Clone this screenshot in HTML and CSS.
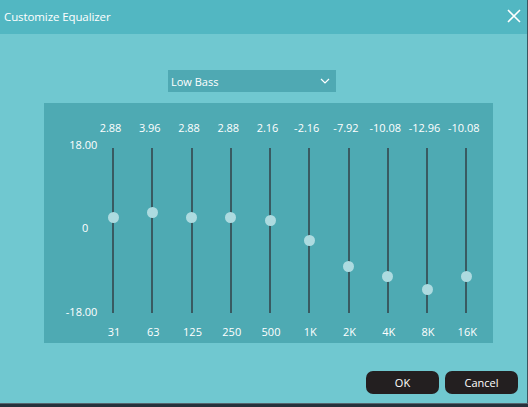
FILE: index.html
```html
<!DOCTYPE html>
<html>
<head>
<meta charset="utf-8">
<link rel="stylesheet" href="styles.css">
</head>
<body>
<div class="window">
  <div class="titlebar">
    <span class="title">Customize Equalizer</span>
    <svg class="close" width="14" height="14" viewBox="0 0 14 14"><path d="M1 1L13 13M13 1L1 13" stroke="#fff" stroke-width="1.6" fill="none"/></svg>
  </div>
  <div class="content">
    <div class="select">
      <span>Low Bass</span>
      <svg class="chev" width="10" height="6" viewBox="0 0 10 6"><path d="M1 1L5 5L9 1" stroke="#fff" stroke-width="1.2" fill="none"/></svg>
    </div>
    <div class="panel">
      <div class="axis">
        <span>18.00</span>
        <span>0</span>
        <span>-18.00</span>
      </div>
      <div class="band"><span class="val">2.88</span><div class="track"><i class="thumb" style="top:69.3px"></i></div><span class="freq">31</span></div>
      <div class="band"><span class="val">3.96</span><div class="track"><i class="thumb" style="top:64.4px"></i></div><span class="freq">63</span></div>
      <div class="band"><span class="val">2.88</span><div class="track"><i class="thumb" style="top:69.3px"></i></div><span class="freq">125</span></div>
      <div class="band"><span class="val">2.88</span><div class="track"><i class="thumb" style="top:69.3px"></i></div><span class="freq">250</span></div>
      <div class="band"><span class="val">2.16</span><div class="track"><i class="thumb" style="top:72.6px"></i></div><span class="freq">500</span></div>
      <div class="band"><span class="val">-2.16</span><div class="track"><i class="thumb" style="top:92.4px"></i></div><span class="freq">1K</span></div>
      <div class="band"><span class="val">-7.92</span><div class="track"><i class="thumb" style="top:118.8px"></i></div><span class="freq">2K</span></div>
      <div class="band"><span class="val">-10.08</span><div class="track"><i class="thumb" style="top:128.7px"></i></div><span class="freq">4K</span></div>
      <div class="band"><span class="val">-12.96</span><div class="track"><i class="thumb" style="top:141.9px"></i></div><span class="freq">8K</span></div>
      <div class="band"><span class="val">-10.08</span><div class="track"><i class="thumb" style="top:128.7px"></i></div><span class="freq">16K</span></div>
    </div>
    <div class="buttons">
      <button class="btn">OK</button>
      <button class="btn">Cancel</button>
    </div>
  </div>
  <div class="taskbar"></div>
</div>
</body>
</html>
```

FILE: styles.css
```css
* { box-sizing: border-box; }
html, body { margin: 0; padding: 0; }
body {
  width: 528px;
  height: 407px;
  overflow: hidden;
  font-family: "Open Sans", "Noto Sans", sans-serif;
  color: #fff;
  background: #70c8d0;
}
.window {
  width: 528px;
  height: 407px;
  display: flex;
  flex-direction: column;
  background: #70c8d0;
  border-right: 1px solid #3b5560;
}
.titlebar {
  height: 34px;
  flex: none;
  background: #52b7c2;
  display: flex;
  align-items: center;
  justify-content: space-between;
  padding: 0 6px 1px 4px;
}
.title {
  font-size: 11.5px;
  letter-spacing: -0.1px;
}
.close { display: block; margin-top: -2px; }
.content {
  flex: 1;
  display: flex;
  flex-direction: column;
  padding-top: 36px;
}
.select {
  margin-left: 168px;
  width: 168px;
  height: 22px;
  background: #4fa9b3;
  display: flex;
  align-items: center;
  justify-content: space-between;
  padding: 0 6px 0 3px;
  font-size: 11px;
}
.chev { display: block; }
.panel {
  margin-top: 11px;
  margin-left: 44px;
  width: 449px;
  height: 240px;
  background: #4eaab3;
  display: flex;
}
.axis {
  width: 49.4px;
  flex: none;
  display: flex;
  flex-direction: column;
  justify-content: space-between;
  align-items: flex-end;
  padding-top: 34px;
  height: 217px;
  margin-right: 0;
  font-size: 11px;
  line-height: 16px;
}
.axis span { margin-right: -4px; }
.axis span:nth-child(2) { margin-right: 5px; margin-top: -2px; }
.band {
  width: 39.25px;
  flex: none;
  display: flex;
  flex-direction: column;
  align-items: center;
  font-size: 11px;
  line-height: 16px;
}
.val { margin-top: 17px; margin-right: 5px; white-space: nowrap; }
.track {
  position: relative;
  margin-top: 12px;
  width: 2px;
  height: 165px;
  background: #395a61;
}
.thumb {
  position: absolute;
  left: 50%;
  width: 11px;
  height: 11px;
  margin: -5.5px 0 0 -5.5px;
  border-radius: 50%;
  background: #addbe0;
}
.freq { margin-top: 11px; margin-left: 2px; }
.buttons {
  display: flex;
  justify-content: flex-end;
  gap: 6px;
  margin-top: 28px;
  padding-right: 9px;
}
.btn {
  width: 73px;
  height: 23px;
  border: none;
  border-radius: 7px;
  background: #231f20;
  color: #fff;
  font-family: "Open Sans", "Noto Sans", sans-serif;
  font-size: 11px;
  padding: 0;
}
.taskbar {
  height: 4px;
  flex: none;
  background: #26323c;
  border-top: 1px solid #56656e;
  margin-right: -1px;
}
```
